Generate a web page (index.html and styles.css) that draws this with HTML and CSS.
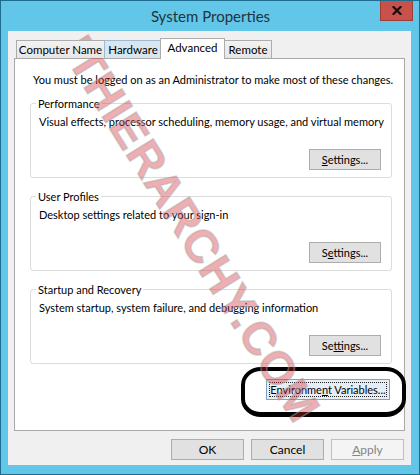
FILE: index.html
```html
<!DOCTYPE html>
<html>
<head>
<meta charset="utf-8">
<title>System Properties</title>
<link rel="stylesheet" href="styles.css">
</head>
<body>
<div class="window">
  <div class="titlebar">
    <div class="title">System Properties</div>
    <div class="close">
      <svg width="10" height="9" viewBox="0 0 10 9"><path d="M1.5 1 L8.5 8 M8.5 1 L1.5 8" stroke="#111" stroke-width="2.2" stroke-linecap="square"/></svg>
    </div>
  </div>
  <div class="client">
    <div class="tabs">
      <div class="tab tab-cn">Computer Name</div>
      <div class="tab tab-hw hover">Hardware</div>
      <div class="tab tab-adv active">Advanced</div>
      <div class="tab tab-rem">Remote</div>
    </div>
    <div class="panel">
      <p class="intro">You must be logged on as an Administrator to make most of these changes.</p>
      <div class="group">
        <span class="legend">Performance</span>
        <p class="desc">Visual effects, processor scheduling, memory usage, and virtual memory</p>
        <div class="btn-row"><button class="btn settings"><u>S</u>ettings...</button></div>
      </div>
      <div class="group">
        <span class="legend">User Profiles</span>
        <p class="desc">Desktop settings related to your sign-in</p>
        <div class="btn-row"><button class="btn settings">S<u>e</u>ttings...</button></div>
      </div>
      <div class="group">
        <span class="legend">Startup and Recovery</span>
        <p class="desc">System startup, system failure, and debugging information</p>
        <div class="btn-row"><button class="btn settings">Se<u>t</u>tings...</button></div>
      </div>
      <div class="env-row"><button class="btn env"><span class="focus">Environme<u>n</u>t Variables...</span></button></div>
    </div>
    <div class="footer">
      <button class="btn dlg">OK</button>
      <button class="btn dlg">Cancel</button>
      <button class="btn dlg disabled"><u>A</u>pply</button>
    </div>
  </div>
  <div class="marker"></div>
  <div class="watermark">ITHIERARCHY.COM</div>
</div>
</body>
</html>
```

FILE: styles.css
```css
* { box-sizing: border-box; }
html, body { margin: 0; padding: 0; }
body {
  width: 420px;
  height: 475px;
  overflow: hidden;
  font-family: Lato, "Liberation Sans", Arial, sans-serif;
  font-size: 11px;
  color: #000;
}
.window {
  position: relative;
  width: 420px;
  height: 475px;
  background: #62c6e8;
  border: 1px solid #1d6b8d;
  padding: 0 8px 9px 7px;
  display: flex;
  flex-direction: column;
  overflow: hidden;
  white-space: nowrap;
}
.titlebar {
  height: 30px;
  display: grid;
  grid-template-columns: 1fr auto 1fr;
  align-items: start;
  margin-right: -2px;
}
.title {
  grid-column: 2;
  font-size: 15px;
  line-height: 30px;
  color: #1d3440;
}
.close {
  grid-column: 3;
  justify-self: end;
  width: 33px;
  height: 20px;
  background: #c8514b;
  border: 1px solid #9c3d38;
  border-top: none;
  display: flex;
  align-items: center;
  justify-content: center;
}
.client {
  flex: 1;
  background: #f0f0f0;
  padding: 7px 6px 5px 6px;
  display: flex;
  flex-direction: column;
}
.tabs {
  display: flex;
  align-items: flex-end;
  height: 21px;
  margin-bottom: -1px;
  padding-left: 2px;
  position: relative;
  z-index: 1;
  font-size: 11.5px;
}
.tab {
  height: 18px;
  margin-bottom: 1px;
  border: 1px solid #acacac;
  border-bottom: none;
  background: linear-gradient(#f2f2f2, #e6e6e6);
  text-align: center;
  line-height: 17px;
}
.tab-cn { width: 89px; }
.tab-hw { width: 58px; margin-left: -1px; background: #d8e6f2; border-color: #9fb8cf; }
.tab-adv { width: 65px; margin-left: -2px; }
.tab-rem { width: 48px; margin-left: -1px; }
.tab.active {
  height: 21px;
  margin-bottom: 0;
  background: #fff;
  line-height: 18px;
  position: relative;
  z-index: 2;
}
.panel {
  flex: 1;
  background: #fff;
  border: 1px solid #a9a9a9;
  padding: 13px 12px 0 15px;
  display: flex;
  flex-direction: column;
}
.intro {
  margin: 0 0 0 3px;
  line-height: 15px;
}
.group {
  position: relative;
  border: 1px solid #dcdcdc;
  border-radius: 3px;
  padding: 10px 10px 7px 8px;
  margin-top: 18px;
}
.intro + .group { margin-top: 16px; }
.legend {
  position: absolute;
  top: -8px;
  left: 5px;
  padding: 0 2px;
  background: #fff;
  line-height: 15px;
}
.desc {
  margin: 0;
  line-height: 15px;
}
.btn-row {
  display: flex;
  justify-content: flex-end;
  margin-top: 20px;
}
.btn {
  font-family: inherit;
  font-size: 11px;
  color: #000;
  height: 21px;
  padding: 0;
  border: 1px solid #adadad;
  background: #e1e1e1;
  border-radius: 0;
  line-height: 19px;
  white-space: nowrap;
}
.settings { width: 72px; }
.env-row {
  display: flex;
  justify-content: flex-end;
  margin-top: 15px;
  margin-right: 2px;
}
.env {
  width: 124px;
  padding: 2px;
  border-color: #7da2c4;
  background: #e5eef7;
}
.focus {
  display: block;
  height: 15px;
  line-height: 14px;
  border: 1px dotted #222;
}
.footer {
  display: flex;
  justify-content: flex-end;
  gap: 7px;
  margin-top: 8px;
  margin-right: 1px;
}
.dlg { width: 73px; font-size: 12px; }
.disabled {
  background: #f4f4f4;
  border-color: #bfbfbf;
  color: #838383;
}
.marker {
  position: absolute;
  left: 240px;
  top: 366px;
  width: 165px;
  height: 50px;
  border: 4px solid #000;
  border-bottom-width: 5px;
  border-radius: 20px / 18px;
}
.watermark {
  position: absolute;
  left: 190px;
  top: 228px;
  transform: translate(-50%, -50%) rotate(58deg);
  font-family: "Liberation Sans", Arial, sans-serif;
  font-weight: bold;
  font-size: 46px;
  letter-spacing: 1px;
  white-space: nowrap;
  color: rgba(214, 40, 50, 0.38);
  -webkit-text-stroke: 1.5px rgba(170, 170, 170, 0.5);
  pointer-events: none;
}
```
